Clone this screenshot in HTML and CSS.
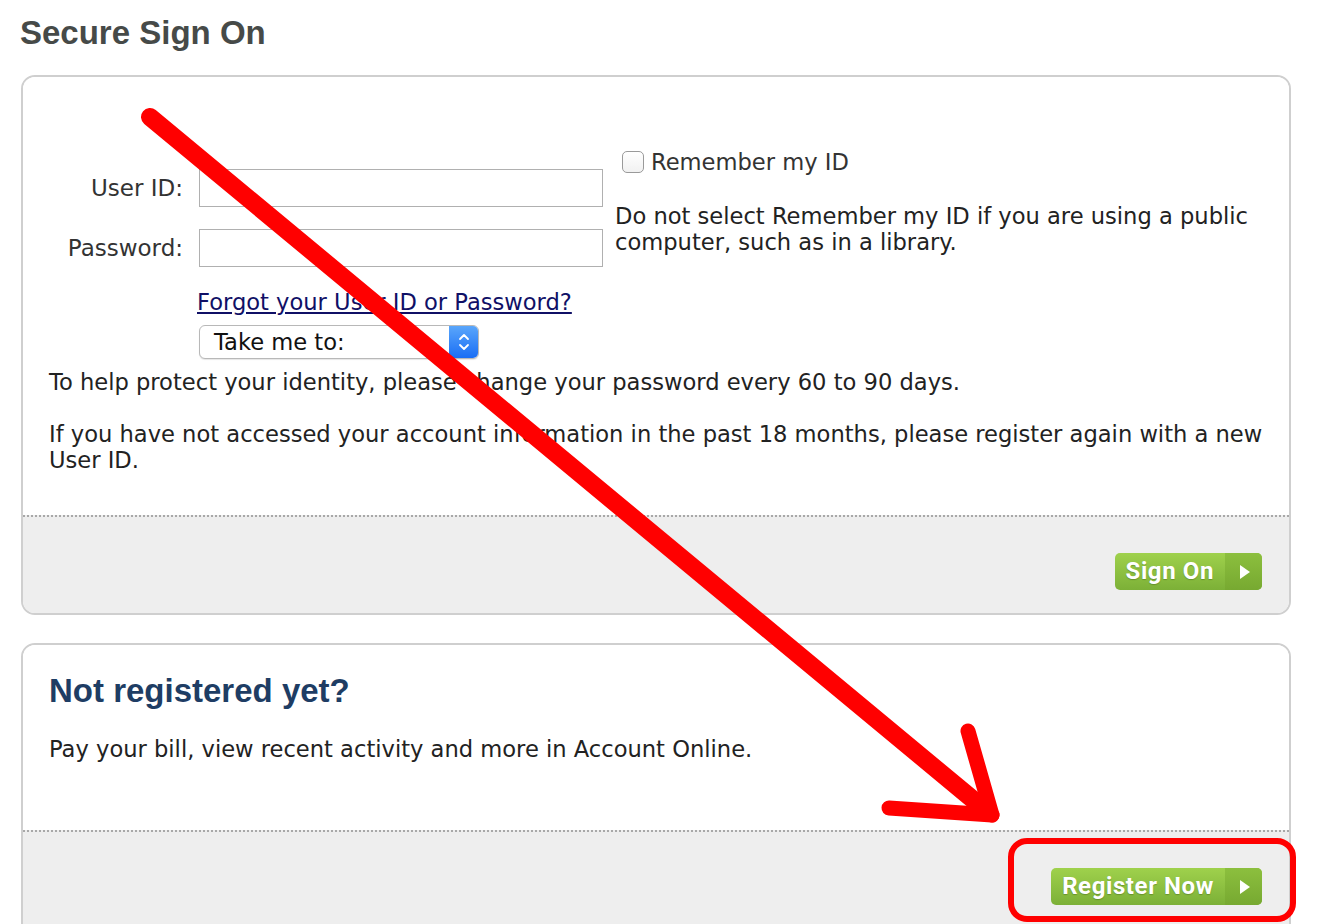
FILE: index.html
```html
<!DOCTYPE html>
<html lang="en">
<head>
    <meta charset="UTF-8">
    <meta name="viewport" content="width=device-width, initial-scale=1.0">
    <title>Secure Sign On</title>
    <link rel="stylesheet" href="styles.css">
</head>
<body>
    <div class="page">
        <h1 class="page-title">Secure Sign On</h1>

        <div class="card">
            <div class="card-body">
                <div class="signon-top">
                    <form class="fields">
                        <label for="userid">User ID:</label>
                        <input type="text" id="userid">
                        <label for="password">Password:</label>
                        <input type="password" id="password">
                    </form>
                    <div class="remember">
                        <label class="remember-check">
                            <span class="checkbox"></span>
                            Remember my ID
                        </label>
                        <p class="remember-note">Do not select Remember my ID if you are using a public computer, such as in a library.</p>
                    </div>
                </div>
                <div class="field-extras">
                    <a href="#" class="forgot">Forgot your User ID or Password?</a>
                    <div class="select-box">
                        <span class="select-text">Take me to:</span>
                        <span class="select-step">
                            <svg width="14" height="22" viewBox="0 0 14 22">
                                <path d="M3 8 L7 4 L11 8" fill="none" stroke="#fff" stroke-width="1.8" stroke-linecap="round" stroke-linejoin="round"/>
                                <path d="M3 14 L7 18 L11 14" fill="none" stroke="#fff" stroke-width="1.8" stroke-linecap="round" stroke-linejoin="round"/>
                            </svg>
                        </span>
                    </div>
                </div>
                <p class="info">To help protect your identity, please change your password every 60 to 90 days.</p>
                <p class="info">If you have not accessed your account information in the past 18 months, please register again with a new User ID.</p>
            </div>
            <div class="card-foot">
                <a href="#" class="btn-go"><span class="btn-label">Sign On</span><span class="btn-arrow"></span></a>
            </div>
        </div>

        <div class="card card-register">
            <div class="card-body register-body">
                <h2 class="register-title">Not registered yet?</h2>
                <p class="info">Pay your bill, view recent activity and more in Account Online.</p>
            </div>
            <div class="card-foot register-foot">
                <a href="#" class="btn-go"><span class="btn-label">Register Now</span><span class="btn-arrow"></span></a>
            </div>
        </div>
    </div>

    <!-- hand-drawn annotation on top of the page -->
    <svg class="annotation" width="1334" height="924" viewBox="0 0 1334 924">
        <g fill="none" stroke="#ff0000" stroke-linecap="round" stroke-linejoin="round">
            <path d="M150 117 L988 812" stroke-width="18"/>
            <path d="M968 731 L992 815" stroke-width="15"/>
            <path d="M889 808 L992 815" stroke-width="15"/>
            <rect x="1011" y="841" width="282" height="78" rx="16" stroke-width="6"/>
        </g>
    </svg>
</body>
</html>
```

FILE: styles.css
```css
body {
    margin: 0;
    background: #ffffff;
    font-family: "DejaVu Sans", Verdana, sans-serif;
    color: #222;
}
.page {
    position: relative;
    padding: 13px 43px 0 21px;
}
.page-title {
    font-family: "Liberation Sans", Arial, sans-serif;
    font-size: 33px;
    line-height: 40px;
    font-weight: bold;
    color: #464a48;
    margin: 0 0 22px -1px;
}
.card {
    border: 2px solid #cfcfcf;
    border-radius: 14px;
    overflow: hidden;
    margin-bottom: 28px;
}
.card-body {
    padding: 72px 18px 42px 26px;
    background: #fff;
}
.card-foot {
    border-top: 2px dotted #a8a8a8;
    background: #eeeeee;
    padding: 36px 27px 23px;
    display: flex;
    justify-content: flex-end;
}
.signon-top {
    display: flex;
    gap: 12px;
    align-items: flex-start;
}
.fields {
    display: grid;
    grid-template-columns: 134px 404px;
    column-gap: 16px;
    row-gap: 22px;
    align-items: center;
    padding-top: 20px;
    margin: 0;
}
.fields label {
    text-align: right;
    font-size: 23px;
    line-height: 34px;
    color: #333;
}
.fields input {
    height: 38px;
    box-sizing: border-box;
    border: 1px solid #b0b0b0;
    margin: 0;
    font-size: 18px;
}
.remember {
    flex: 1;
}
.remember-check {
    display: flex;
    align-items: center;
    gap: 7px;
    font-size: 22.6px;
    line-height: 26px;
    color: #333;
    padding-left: 7px;
}
.checkbox {
    width: 22px;
    height: 22px;
    box-sizing: border-box;
    border: 1px solid #9a9a9a;
    border-radius: 5px;
    background: linear-gradient(#fff, #f1f1f1);
}
.remember-note {
    margin: 28px 0 0;
    font-size: 22.6px;
    line-height: 26px;
}
.field-extras {
    margin-left: 150px;
}
.forgot {
    display: inline-block;
    margin-top: 22px;
    margin-left: -2px;
    font-size: 22.6px;
    line-height: 26px;
    color: #101066;
    text-decoration: underline;
}
.select-box {
    display: flex;
    width: 280px;
    height: 34px;
    box-sizing: border-box;
    margin-top: 10px;
    border: 1px solid #b8b8b8;
    border-radius: 6px;
    overflow: hidden;
    background: #fff;
    box-shadow: 0 1px 1px rgba(0, 0, 0, 0.1);
}
.select-text {
    flex: 1;
    padding-left: 14px;
    font-size: 22.6px;
    line-height: 32px;
    color: #111;
}
.select-step {
    width: 29px;
    display: flex;
    align-items: center;
    justify-content: center;
    background: linear-gradient(#5aa6fb, #1a6ef5);
}
.info {
    margin: 10px 0 26px;
    font-size: 22.6px;
    line-height: 26px;
}
.info:last-child {
    margin-bottom: 0;
}
.btn-go {
    display: flex;
    height: 37px;
    border-radius: 5px;
    overflow: hidden;
    text-decoration: none;
    background: linear-gradient(#9fd14c, #7cb037);
}
.btn-label {
    padding: 0 11px 0 11px;
    font-family: Roboto, "DejaVu Sans", sans-serif;
    font-weight: bold;
    font-size: 24px;
    line-height: 37px;
    letter-spacing: 0.6px;
    color: #fff;
    text-shadow: 0 1px 1px rgba(60, 90, 20, 0.4);
}
.btn-arrow {
    width: 37px;
    display: flex;
    align-items: center;
    justify-content: center;
    background: linear-gradient(#8cbf3e, #77a931);
}
.btn-arrow::before {
    content: "";
    border-left: 10px solid #fff;
    border-top: 7px solid transparent;
    border-bottom: 7px solid transparent;
    margin-left: 3px;
}
.register-body {
    padding: 26px 27px 68px 26px;
}
.register-title {
    font-family: "Liberation Sans", Arial, sans-serif;
    font-size: 33px;
    line-height: 40px;
    font-weight: bold;
    color: #1e3d64;
    margin: 0 0 25px;
}
.register-body .info {
    margin: 0;
}
.register-foot {
    padding-bottom: 40px;
}
.annotation {
    position: absolute;
    top: 0;
    left: 0;
    pointer-events: none;
}
```
